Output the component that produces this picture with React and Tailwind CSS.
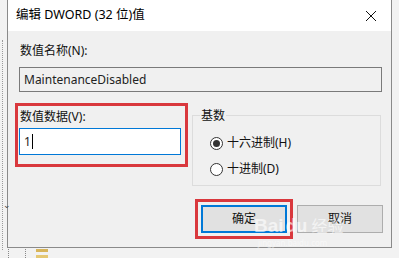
import React from 'react';

const font = { fontFamily: '"Noto Sans", "Noto Sans CJK SC", sans-serif' };

function Radio({ checked, label }) {
  return (
    <div className="flex items-center gap-[4px] h-[16px]">
      <span className="w-[13px] h-[13px] rounded-full border border-[#333] bg-white flex items-center justify-center">
        {checked && <span className="w-[7px] h-[7px] rounded-full bg-[#333]" />}
      </span>
      <span className="text-[12px] text-[#111] leading-none">{label}</span>
    </div>
  );
}

export default function App() {
  return (
    <div className="relative w-[399px] h-[258px] bg-[#f2f2f2] overflow-hidden" style={font}>
      {/* background tree view bits */}
      <div className="absolute left-[2px] top-[40px] h-[210px] border-l border-dotted border-[#9a9a9a]" />
      <div className="absolute left-[3px] top-[200px] text-[9px] text-[#444] leading-none">⌄</div>

      <div className="ml-[7px] w-[385px] h-[248px] flex flex-col border-l border-r border-b border-[#8a8a8a] bg-[#f0f0f0]">
        {/* title bar */}
        <div className="h-[31px] bg-white flex items-center justify-between pl-[8px] pr-[8px]">
          <span className="text-[12.5px] text-black">编辑 DWORD (32 位)值</span>
          <svg width="12" height="12" viewBox="0 0 12 12" className="mr-[6px]">
            <path d="M1 1 L11 11 M11 1 L1 11" stroke="#111" strokeWidth="1" />
          </svg>
        </div>

        {/* body */}
        <div className="flex-1 pl-[11px] pr-[9px] pt-[11px] flex flex-col">
          <div className="text-[12px] text-[#111] h-[17px] leading-[17px] pl-[1px]">数值名称(N):</div>
          <div className="mt-[8px] h-[25px] border border-[#7a7a7a] bg-[#f0f0f0] flex items-center pl-[4px] text-[12px] text-[#222]">
            MaintenanceDisabled
          </div>

          <div className="flex mt-[11px]">
            <div className="-ml-[4px] w-[173px] h-[64px] border-[3px] border-[#d9383d] pl-[1px] pt-[2px]">
              <div className="text-[12px] text-[#111] h-[17px] leading-[17px] pl-[1px]">数值数据(V):</div>
              <div className="mt-[3px] w-[162px] h-[27px] border border-[#0078d7] bg-white flex items-center pl-[4px] text-[12px] text-[#222]">
                1<span className="ml-[1px] w-[1px] h-[15px] bg-black" />
              </div>
            </div>

            <div className="relative ml-[4px] mt-[12px] w-[189px] h-[71px] border border-[#dcdcdc] pt-[19px] pl-[17px]">
              <span className="absolute -top-[9px] left-[7px] px-[1px] bg-[#f0f0f0] text-[12px] leading-[17px] text-[#111]">基数</span>
              <Radio checked label="十六进制(H)" />
              <div className="h-[10px]" />
              <Radio label="十进制(D)" />
            </div>
          </div>

          <div className="flex justify-end items-center mt-[13px]">
            <div className="border-[3px] border-[#d9383d] p-[3px]">
              <button className="w-[86px] h-[28px] border-2 border-[#0078d7] bg-[#e1e1e1] text-[12px] text-[#111]">确定</button>
            </div>
            <button className="ml-[4px] -mr-[1px] w-[86px] h-[28px] border border-[#adadad] bg-[#e1e1e1] text-[12px] text-[#111]">取消</button>
          </div>
        </div>
      </div>

      {/* background below dialog */}
      <div className="absolute left-[8px] top-[249px] h-[9px] border-l border-dotted border-[#888]" />
      <div className="absolute left-[25px] top-[249px] h-[9px] border-l border-dotted border-[#888]" />
      <div className="absolute left-[36px] top-[249px] w-[12px] h-[3px] bg-[#d8b55a]" />
      <div className="absolute left-[36px] top-[255px] w-[12px] h-[3px] bg-[#e5c873]" />

      {/* watermark */}
      <div className="absolute left-[254px] top-[216px] flex items-center text-white opacity-60 font-bold text-[19px] leading-none">
        <span style={{ fontFamily: '"Liberation Sans", sans-serif' }}>Bai</span>
        <span className="ml-[2px] text-[17px]">du</span>
        <span className="ml-[4px] text-[16px] font-normal">经验</span>
      </div>
      <div className="absolute left-[258px] top-[239px] text-[8px] text-white opacity-50 leading-none">jingyan.baidu.com</div>
    </div>
  );
}
